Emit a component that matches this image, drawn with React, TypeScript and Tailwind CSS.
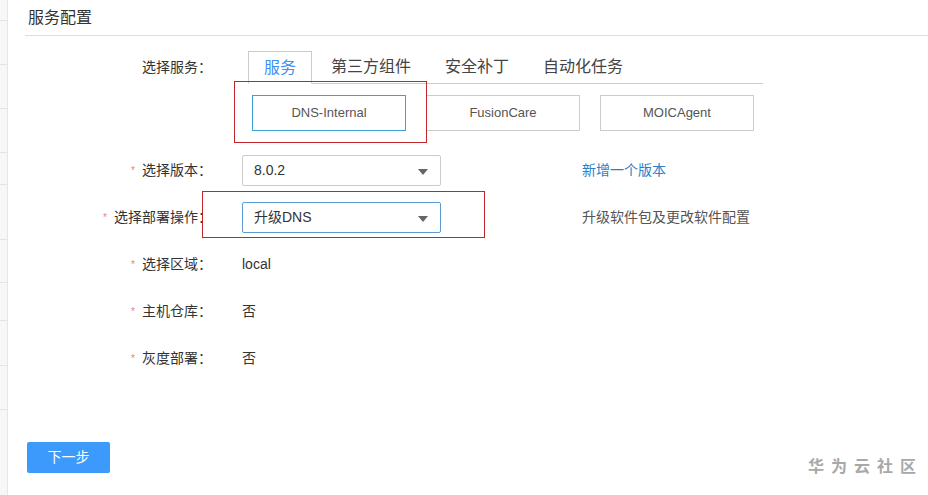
const FONT = "font-['Liberation_Sans','Noto_Sans_CJK_SC',sans-serif]";

const tabs = ['服务', '第三方组件', '安全补丁', '自动化任务'];
const services = ['DNS-Internal', 'FusionCare', 'MOICAgent'];

// Small filled caret used by the dropdowns
function Caret() {
  return (
    <svg width="10" height="6" viewBox="0 0 10 6" className="absolute right-[12px] top-[13px]">
      <path d="M0 0h10L5 6z" fill="#666" />
    </svg>
  );
}

function Select({ value, focused }: { value: string; focused?: boolean }) {
  return (
    <div
      className={`relative flex items-center w-[199px] h-[31px] rounded-[2px] border bg-white pl-[11px] text-[14px] text-[#333] ${
        focused ? 'border-[#5b9bd5]' : 'border-[#ccc]'
      }`}
    >
      {value}
      <Caret />
    </div>
  );
}

function Label({ text, required = true }: { text: string; required?: boolean }) {
  return (
    <div className="w-[204px] shrink-0 flex justify-end items-center text-[14px] text-[#333]">
      {required && <span className="text-[#e98080] text-[10px] mr-[7px]">*</span>}
      <span>{text}</span>
    </div>
  );
}

function FormRow({ label, children, note }: { label: string; children: React.ReactNode; note?: React.ReactNode }) {
  return (
    <div className="flex items-center h-[47px]">
      <Label text={label} />
      <div className="ml-[30px] flex items-center w-[199px] text-[14px] text-[#333]">{children}</div>
      {note && <div className="ml-[141px] text-[14px]">{note}</div>}
    </div>
  );
}

export default function App() {
  return (
    <div className={`${FONT} flex w-[928px] h-[495px] bg-white overflow-hidden`}>
      {/* Collapsed side table */}
      <div className="w-[8px] shrink-0 bg-[#f7f7f7] border-r border-[#e6e6e6] flex flex-col">
        {[21, 44, 44, 44, 32, 55, 43, 38, 45, 44].map((h, i) => (
          <div key={i} className="border-b border-[#e3e3e3] shrink-0" style={{ height: h }} />
        ))}
      </div>

      <div className="relative flex-1">
        <div className="ml-[17px] h-[36px] border-b border-[#ddd] pl-[3px] pt-[6px] text-[16px] text-[#333]">
          服务配置
        </div>

        {/* Service picker */}
        <div className="flex items-center mt-[15px]">
          <div className="w-[204px] shrink-0 flex justify-end text-[14px] text-[#333]">选择服务：</div>
          <div className="ml-[36px] flex w-[515px] border-b border-[#ccc] h-[33px]">
            {tabs.map((t, i) => (
              <div
                key={t}
                className={`px-[15px] mr-[4px] flex items-center text-[16px] ${
                  i === 0
                    ? 'text-[#3e8ef7] border border-[#ccc] border-b-white -mb-px bg-white'
                    : 'text-[#444]'
                }`}
              >
                {t}
              </div>
            ))}
          </div>
        </div>
        <div className="flex gap-[20px] ml-[244px] mt-[11px] mb-[16px]">
          {services.map((s, i) => (
            <div
              key={s}
              className={`w-[154px] h-[36px] flex items-center justify-center text-[13px] text-[#555] border ${
                i === 0 ? 'border-[#3fa0d8]' : 'border-[#ccc]'
              }`}
            >
              {s}
            </div>
          ))}
        </div>

        <FormRow label="选择版本：" note={<span className="text-[#2a7fc9]">新增一个版本</span>}>
          <Select value="8.0.2" />
        </FormRow>
        <FormRow label="选择部署操作：" note={<span className="text-[#555]">升级软件包及更改软件配置</span>}>
          <Select value="升级DNS" focused />
        </FormRow>
        <FormRow label="选择区域：">local</FormRow>
        <FormRow label="主机仓库：">否</FormRow>
        <FormRow label="灰度部署：">否</FormRow>

        <button className="ml-[19px] mt-[60px] w-[83px] h-[31px] rounded-[2px] bg-[#3c9afc] text-white text-[14px]">
          下一步
        </button>

        {/* Review highlights */}
        <div className="absolute left-[226px] top-[81px] w-[193px] h-[62px] border border-[#c0262c]" />
        <div className="absolute left-[194px] top-[191px] w-[283px] h-[47px] border border-[#c0262c]" />

        <div className="absolute right-[5px] bottom-[16px] text-[16px] font-bold tracking-[7px] text-[#a8a8a8]">
          华为云社区
        </div>
      </div>
    </div>
  );
}
